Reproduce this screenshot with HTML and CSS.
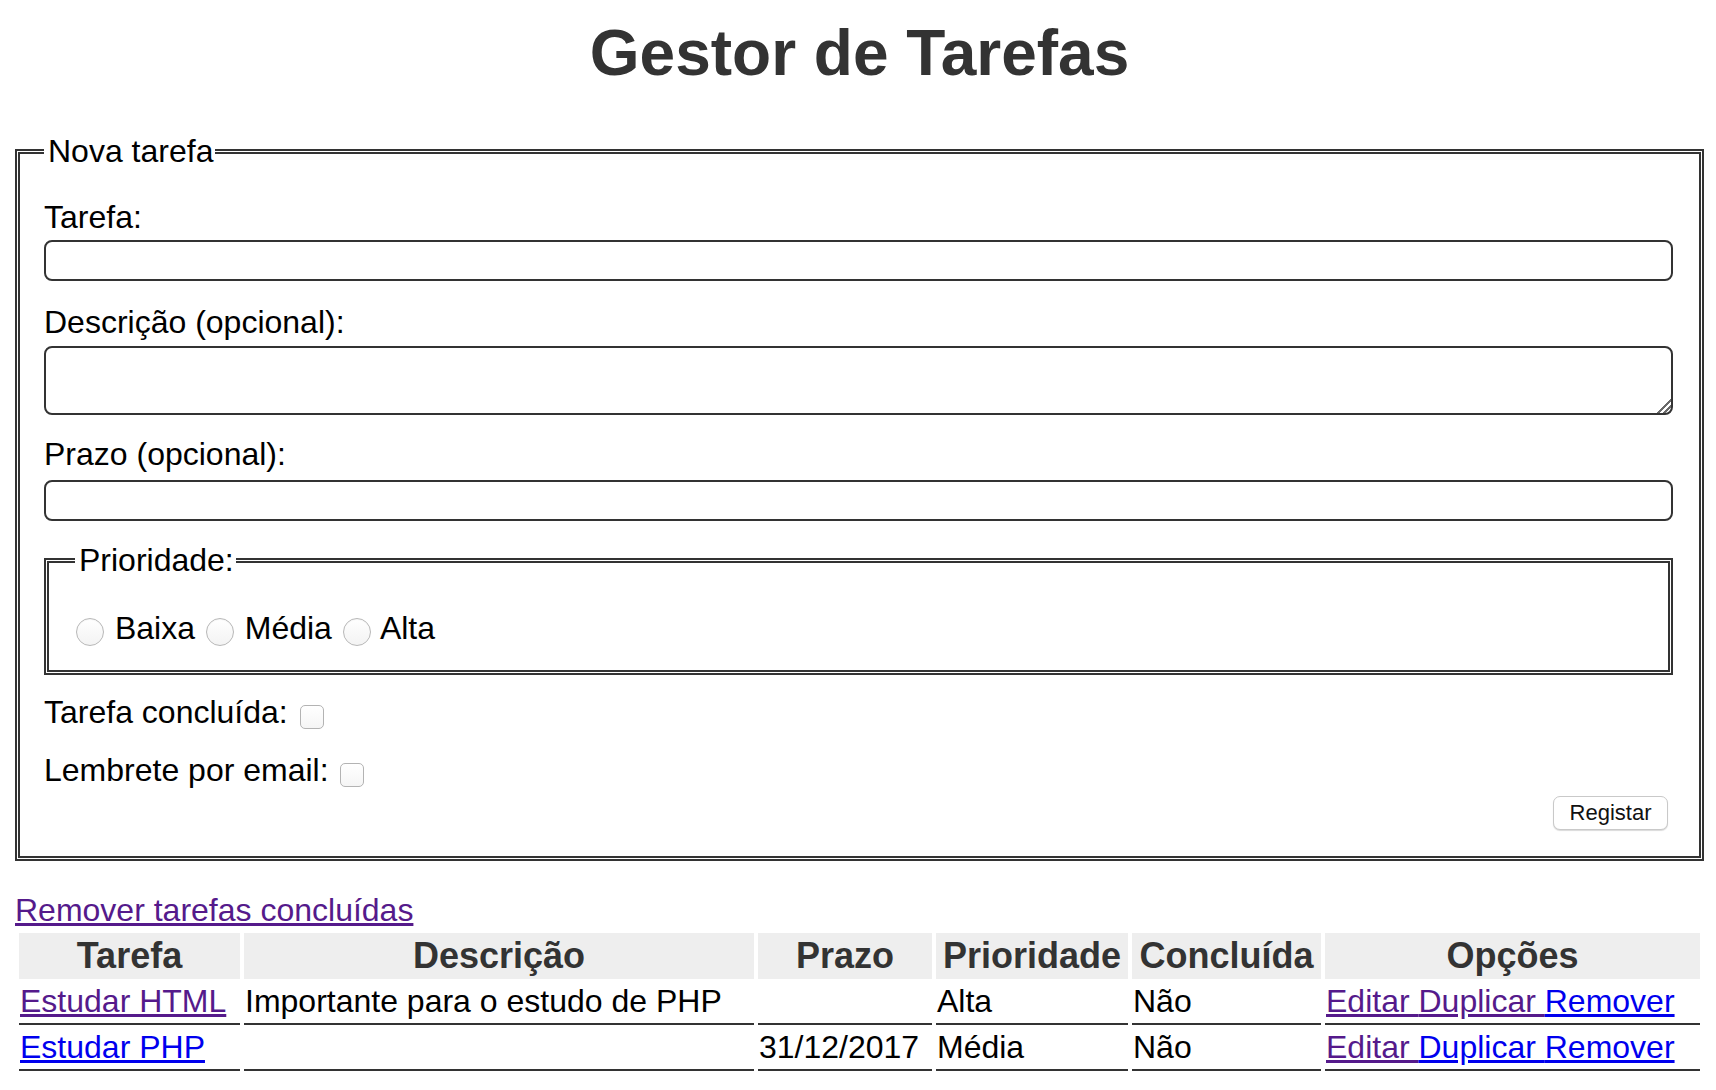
FILE: index.html
```html
<!DOCTYPE html>
<html lang="pt">
<head>
<meta charset="utf-8">
<title>Gestor de Tarefas</title>
<link rel="stylesheet" href="styles.css">
</head>
<body>
<h1 class="title">Gestor de Tarefas</h1>
<form class="form">
  <fieldset class="task-box">
    <legend class="legend">Nova tarefa</legend>
    <label class="lbl lbl-first" for="tarefa">Tarefa:</label>
    <input class="text-input" id="tarefa" type="text">
    <label class="lbl lbl-desc" for="descricao">Descrição (opcional):</label>
    <textarea class="text-area" id="descricao"></textarea>
    <label class="lbl lbl-prazo" for="prazo">Prazo (opcional):</label>
    <input class="text-input input-prazo" id="prazo" type="text">
    <fieldset class="prio-box">
      <legend class="legend prio-legend">Prioridade:</legend>
      <div class="radio-row"><input class="radio radio-first" type="radio" name="prio"> Baixa <input class="radio" type="radio" name="prio"> Média <input class="radio" type="radio" name="prio"> Alta</div>
    </fieldset>
    <div class="check-row row-concl">Tarefa concluída: <input class="check" type="checkbox"></div>
    <div class="check-row row-email">Lembrete por email: <input class="check" type="checkbox"></div>
    <div class="btn-row"><button class="btn" type="button">Registar</button></div>
  </fieldset>
</form>
<div class="remove-line"><a class="link visited" href="#">Remover tarefas concluídas</a></div>
<table class="tasks">
  <thead>
    <tr>
      <th class="c-tarefa">Tarefa</th>
      <th class="c-desc">Descrição</th>
      <th class="c-prazo">Prazo</th>
      <th class="c-prio">Prioridade</th>
      <th class="c-concl">Concluída</th>
      <th class="c-opc">Opções</th>
    </tr>
  </thead>
  <tbody>
    <tr>
      <td><a class="link visited" href="#">Estudar HTML</a></td>
      <td>Importante para o estudo de PHP</td>
      <td></td>
      <td>Alta</td>
      <td>Não</td>
      <td><a class="link visited" href="#">Editar </a><a class="link visited" href="#">Duplicar </a><a class="link" href="#">Remover</a></td>
    </tr>
    <tr>
      <td><a class="link" href="#">Estudar PHP</a></td>
      <td></td>
      <td>31/12/2017</td>
      <td>Média</td>
      <td>Não</td>
      <td><a class="link visited" href="#">Editar </a><a class="link" href="#">Duplicar </a><a class="link" href="#">Remover</a></td>
    </tr>
  </tbody>
</table>
</body>
</html>
```
FILE: styles.css
```css
html, body {
  background: #fff;
}
body {
  margin: 0;
  padding: 0 12px 0 15px;
  font-family: "Liberation Sans", Arial, Helvetica, sans-serif;
  font-size: 32px;
  line-height: 37px;
  color: #000;
}
.title {
  margin: 16px 0 0;
  font-size: 64px;
  line-height: 74px;
  font-weight: bold;
  text-align: center;
  color: #333;
}
.form {
  margin: 0;
}
.task-box {
  margin: 43px 0 0;
  border: 5px double #333;
  padding: 29px 26px 26px 24px;
  min-width: 0;
  display: flex;
  flex-direction: column;
}
.legend {
  padding: 0 2px 0 4px;
  line-height: 37px;
}
.prio-legend {
  margin-left: 3px;
}
.lbl {
  display: block;
}
.lbl-desc {
  margin-top: 23px;
}
.lbl-prazo {
  margin-top: 21px;
}
.text-input {
  display: block;
  box-sizing: border-box;
  width: 100%;
  height: 41px;
  margin: 4px 0 0;
  border: 2px solid #333;
  border-radius: 8px;
  background: #fff;
  font: inherit;
  padding: 0 8px;
}
.input-prazo {
  margin-top: 7px;
}
.text-area {
  display: block;
  box-sizing: border-box;
  width: 100%;
  height: 69px;
  margin: 5px 0 0;
  border: 2px solid #333;
  border-radius: 8px;
  background: #fff;
  font: inherit;
  padding: 4px 8px;
}
.text-area::-webkit-resizer {
  background: linear-gradient(135deg, transparent 0 52%, #6a6a6a 52% 62%, transparent 62% 72%, #6a6a6a 72% 82%, transparent 82%);
}
.prio-box {
  margin: 21px 0 0;
  border: 5px double #333;
  padding: 31px 24px 23px 23px;
  min-width: 0;
}
.radio-row {
  line-height: 37px;
}
.radio {
  appearance: none;
  -webkit-appearance: none;
  width: 28px;
  height: 28px;
  margin: 2px 2px 0 2px;
  border: 1px solid #b8b8b8;
  border-radius: 50%;
  background: linear-gradient(#ffffff, #f3f3f3);
  box-shadow: inset 0 1px 1px rgba(0, 0, 0, 0.04);
  vertical-align: middle;
  box-sizing: border-box;
}
.radio-first {
  margin-left: 4px;
}
.check-row {
  line-height: 37px;
}
.row-concl {
  margin-top: 19px;
}
.row-email {
  margin-top: 21px;
}
.check {
  appearance: none;
  -webkit-appearance: none;
  width: 24px;
  height: 24px;
  margin: 4px 0 0 3px;
  border: 1px solid #b3b3b3;
  border-radius: 5px;
  background: linear-gradient(#ffffff, #f5f5f5);
  vertical-align: middle;
  box-sizing: border-box;
}
.btn-row {
  display: flex;
  justify-content: flex-end;
  margin-top: 7px;
}
.btn {
  height: 34px;
  width: 115px;
  margin-right: 5px;
  border: 1px solid #c9c9c9;
  border-radius: 7px;
  background: #fff;
  box-shadow: 0 1px 1px rgba(0, 0, 0, 0.15);
  font-family: "Liberation Sans", Arial, Helvetica, sans-serif;
  font-size: 22px;
  color: #111;
  padding: 0;
}
.remove-line {
  margin-top: 31px;
  line-height: 37px;
}
.link {
  color: #0000ee;
  text-decoration: underline;
}
.link.visited {
  color: #551a8b;
}
.tasks {
  width: 100%;
  table-layout: fixed;
  border-spacing: 4px;
  margin-left: 0;
}
.tasks th {
  box-sizing: border-box;
  background: #eee;
  color: #333;
  font-size: 36px;
  line-height: 44px;
  font-weight: bold;
  padding: 1px;
  text-align: center;
}
.tasks td {
  font-size: 32px;
  line-height: 37px;
  padding: 0 1px 3px;
  border-bottom: 2px solid #333;
  vertical-align: middle;
  white-space: nowrap;
}
.c-tarefa { width: 221px; }
.c-desc { width: 510px; }
.c-prazo { width: 174px; }
.c-prio { width: 192px; }
.c-concl { width: 189px; }
.c-opc { width: 375px; }
```
